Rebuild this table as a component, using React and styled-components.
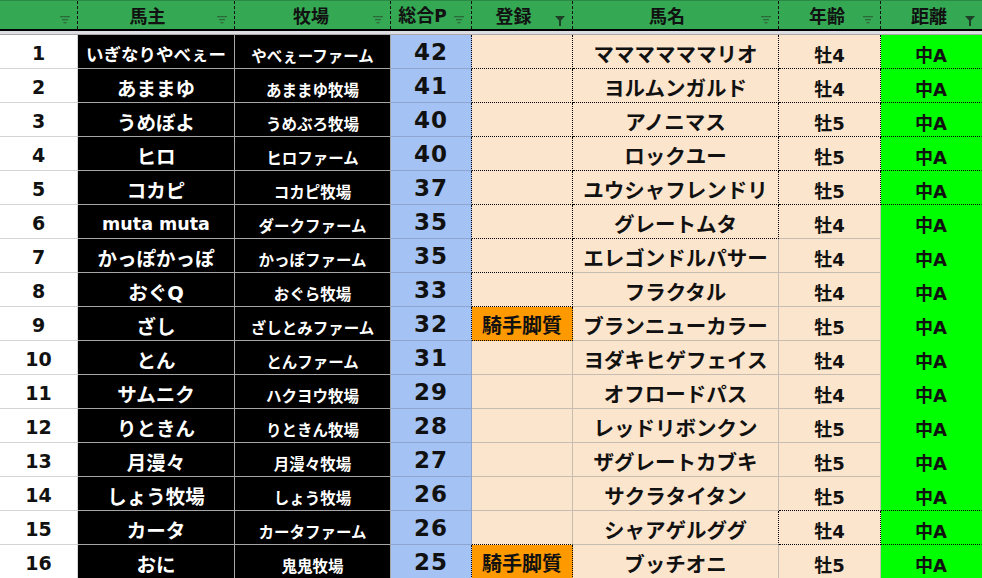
import React from 'react'
import styled, { createGlobalStyle } from 'styled-components'

const GlobalStyle = createGlobalStyle`
  html, body {
    margin: 0;
    padding: 0;
    background: #ffffff;
  }
  body {
    font-family: "DejaVu Sans", "Noto Sans CJK JP", sans-serif;
    overflow: hidden;
  }
`

const COLS = '78px 157px 156px 81px 101px 206px 102px 101px'

const Sheet = styled.div`
  width: 982px;
  height: 578px;
  overflow: hidden;
  background: #ffffff;
`

const HeaderRow = styled.div`
  display: grid;
  grid-template-columns: ${COLS};
  height: 29px;
  background: #34a853;
  border-top: 1px solid #2a8a44;
  box-sizing: border-box;
`

const HeadCell = styled.div`
  display: grid;
  grid-template-columns: 1fr auto;
  align-items: center;
  padding-right: 7px;
  border-right: 1px dashed #111;
  box-sizing: border-box;
  &:last-child {
    border-right: 0;
  }
`

const HeadLabel = styled.div`
  text-align: center;
  padding-left: ${(p) => p.$shift || 0}px;
  font-family: "Noto Sans CJK JP", sans-serif;
  font-weight: 700;
  font-size: 18px;
  line-height: 26px;
  color: #111;
  white-space: nowrap;
`

const Latin = styled.span`
  font-family: "DejaVu Sans", sans-serif;
  font-weight: 700;
  font-size: 17px;
`

const IconSlot = styled.div`
  display: flex;
  align-self: end;
  padding-bottom: ${(p) => (p.$funnel ? 3 : 5)}px;
`

const HeaderRule = styled.div`
  height: 2px;
  background: #000;
`

const Band = styled.div`
  height: 3px;
  background: #dcdee4;
  border-bottom: 1px solid #a8a8a8;
`

const Row = styled.div`
  display: grid;
  grid-template-columns: ${COLS};
  height: 34px;
`

const Cell = styled.div`
  display: flex;
  align-items: center;
  justify-content: center;
  box-sizing: border-box;
  white-space: nowrap;
  overflow: hidden;
  background: ${(p) => p.$bg};
  color: ${(p) => p.$color || '#111'};
  font-weight: 700;
  font-size: ${(p) => p.$size}px;
  font-family: ${(p) =>
    p.$num ? '"DejaVu Sans", sans-serif' : '"DejaVu Sans", "Noto Sans CJK JP", sans-serif'};
  padding-top: ${(p) => p.$down || 0}px;
  border-bottom: 1px ${(p) => (p.$db ? 'dotted #000' : `solid ${p.$line}`)};
  border-right: 1px ${(p) => (p.$dr ? 'dotted #000' : `solid ${p.$line}`)};
  letter-spacing: ${(p) => p.$ls || 0}px;
`

const rows = [
  ['いぎなりやべぇー', 'やべぇーファーム', 42, '', 'ママママママリオ', '牡4'],
  ['あままゆ', 'あままゆ牧場', 41, '', 'ヨルムンガルド', '牡4'],
  ['うめぼよ', 'うめぶろ牧場', 40, '', 'アノニマス', '牡5'],
  ['ヒロ', 'ヒロファーム', 40, '', 'ロックユー', '牡5'],
  ['コカピ', 'コカピ牧場', 37, '', 'ユウシャフレンドリ', '牡5'],
  ['muta muta', 'ダークファーム', 35, '', 'グレートムタ', '牡4'],
  ['かっぽかっぽ', 'かっぽファーム', 35, '', 'エレゴンドルパサー', '牡4'],
  ['おぐQ', 'おぐら牧場', 33, '', 'フラクタル', '牡4'],
  ['ざし', 'ざしとみファーム', 32, '騎手脚質', 'ブランニューカラー', '牡5'],
  ['とん', 'とんファーム', 31, '', 'ヨダキヒゲフェイス', '牡4'],
  ['サムニク', 'ハクヨウ牧場', 29, '', 'オフロードパス', '牡4'],
  ['りときん', 'りときん牧場', 28, '', 'レッドリボンクン', '牡5'],
  ['月漫々', '月漫々牧場', 27, '', 'ザグレートカブキ', '牡5'],
  ['しょう牧場', 'しょう牧場', 26, '', 'サクラタイタン', '牡5'],
  ['カータ', 'カータファーム', 26, '', 'シャアゲルググ', '牡4'],
  ['おに', '鬼鬼牧場', 25, '騎手脚質', 'ブッチオニ', '牡5'],
]

// cells drawn with Excel's dotted border: [row, col]
const dottedCells = new Set()
for (let r = 0; r < 5; r++) [4, 5, 6, 7].forEach((c) => dottedCells.add(`${r}-${c}`))
for (let r = 5; r < 9; r++) dottedCells.add(`${r}-4`)
dottedCells.add('5-5')
;[6, 7].forEach((c) => dottedCells.add(`14-${c}`))
dottedCells.add('15-4')

const isDot = (r, c) => dottedCells.has(`${r}-${c}`)

const Lines = () => (
  <svg width="10" height="8" viewBox="0 0 10 8">
    <rect x="0" y="0" width="10" height="1.3" fill="#2c6a3c" />
    <rect x="2" y="3" width="6" height="1.3" fill="#2c6a3c" />
    <rect x="3.5" y="6" width="3" height="1.3" fill="#2c6a3c" />
  </svg>
)

const Funnel = () => (
  <svg width="10" height="10" viewBox="0 0 10 10">
    <path d="M0 0 H10 L6 4.5 V10 H4 V4.5 Z" fill="#1d3f27" />
  </svg>
)

const headers = [
  { label: '' },
  { label: '馬主', shift: 0 },
  { label: '牧場', shift: 14 },
  { label: <>総合<Latin>P</Latin></>, shift: 0 },
  { label: '登録', funnel: true, shift: 0 },
  { label: '馬名', shift: 0 },
  { label: '年齢', shift: 12 },
  { label: '距離', funnel: true, shift: 12 },
]

const cellStyle = (c, row) => {
  switch (c) {
    case 0:
      return { $bg: '#ffffff', $line: '#d4d4d4', $size: 19, $num: true, $down: 3 }
    case 1:
      return {
        $bg: '#000',
        $color: '#fff',
        $line: '#a6a6a6',
        $size: row[0].length >= 8 ? 17.5 : 19.5,
        $down: 4,
      }
    case 2:
      return { $bg: '#000', $color: '#fff', $line: '#a6a6a6', $size: 15.5, $down: 7 }
    case 3:
      return { $bg: '#a4c2f4', $line: '#8ea6cf', $size: 23, $num: true, $ls: 1 }
    case 4:
      return {
        $bg: row[3] ? '#ff9900' : '#fce5cd',
        $line: '#c6bcb2',
        $size: 20,
        $down: 2,
      }
    case 5:
      return { $bg: '#fce5cd', $line: '#c6bcb2', $size: 20.5, $down: 2 }
    case 6:
      return { $bg: '#fce5cd', $line: '#c6bcb2', $size: 18, $down: 4 }
    default:
      return { $bg: '#00ff00', $line: '#00ff00', $size: 18, $down: 4 }
  }
}

const App = () => {
  return (
    <Sheet>
      <GlobalStyle />
      <HeaderRow>
        {headers.map((h, i) => (
          <HeadCell key={i}>
            <HeadLabel $shift={h.shift}>{h.label}</HeadLabel>
            <IconSlot $funnel={h.funnel}>{h.funnel ? <Funnel /> : <Lines />}</IconSlot>
          </HeadCell>
        ))}
      </HeaderRow>
      <HeaderRule />
      <Band />
      {rows.map((row, r) => {
        const values = [r + 1, row[0], row[1], row[2], row[3], row[4], row[5], '中A']
        return (
          <Row key={r}>
            {values.map((v, c) => {
              const dot = isDot(r, c)
              const db = dot || isDot(r + 1, c)
              const dr = dot || isDot(r, c + 1)
              return (
                <Cell key={c} {...cellStyle(c, row)} $db={db} $dr={dr && c < 7}>
                  {v}
                </Cell>
              )
            })}
          </Row>
        )
      })}
    </Sheet>
  )
}

export default App
